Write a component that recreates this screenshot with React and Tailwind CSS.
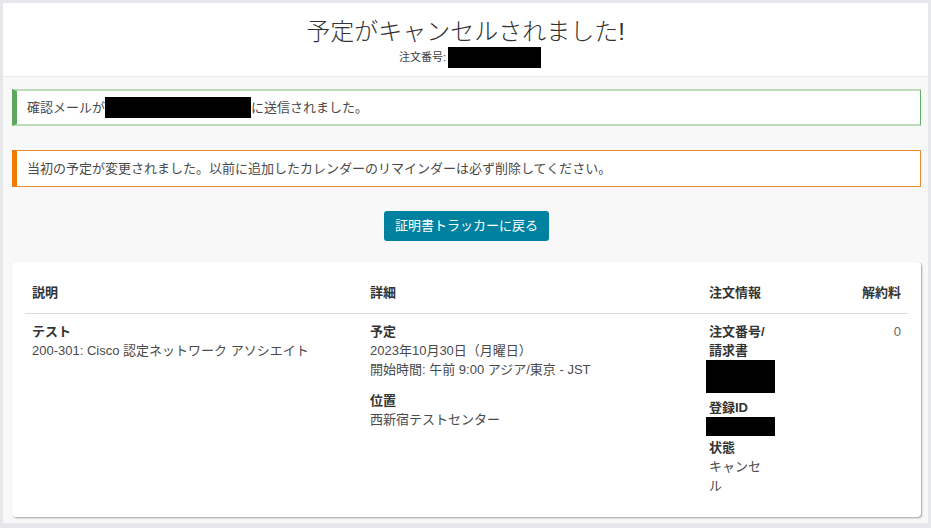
import React from 'react';

const FONT = { fontFamily: '"Liberation Sans", "Noto Sans CJK JP", sans-serif' };

// --- Redaction block ---
const Redacted = ({ className }) => (
  <span className={`inline-block bg-black align-middle ${className}`}></span>
);

// --- Alert banner ---
const Alert = ({ tone, children, className = '' }) => {
  const styles =
    tone === 'success'
      ? 'border-l-[5px] border-l-[#5ea75e] border-y-2 border-y-[#bcdcbc] border-r border-r-[#63aa63]'
      : 'border-l-[5px] border-l-[#ef7b00] border-y border-y-[#e98a2c] border-r border-r-[#e98a2c]';
  return (
    <div className={`h-[37px] flex items-center bg-white pl-[10px] text-[13px] text-[#4a4a4a] ${styles} ${className}`}>
      {children}
    </div>
  );
};

export default function App() {
  return (
    <div className="min-h-[528px] w-[931px] bg-[#e6e7eb] pt-[3px] pl-[3px] pr-[3px] pb-[5px]" style={FONT}>
      <div className="w-[925px] h-[520px] flex flex-col">
        {/* Header */}
        <header className="h-[74px] bg-white border-b border-[#ebebeb] flex flex-col items-center pt-[14px]">
          <h1 className="text-[24px] leading-[30px] font-light text-[#333]">予定がキャンセルされました!</h1>
          <div className="flex items-center gap-[2px] text-[11px] text-[#444] pl-[9px]">
            <span>注文番号:</span>
            <Redacted className="w-[93px] h-[21px]" />
          </div>
        </header>

        {/* Body */}
        <main className="flex-1 bg-[#f8f8f8] pl-[9px] pr-[7px] pt-[12px]">
          <Alert tone="success">
            <span>確認メールが</span>
            <Redacted className="w-[146px] h-[21px]" />
            <span>に送信されました。</span>
          </Alert>

          <Alert tone="warning" className="mt-[24px]">
            当初の予定が変更されました。以前に追加したカレンダーのリマインダーは必ず削除してください。
          </Alert>

          <div className="flex justify-center mt-[24px]">
            <button className="w-[165px] h-[30px] rounded-[3px] bg-[#00819f] text-white text-[13px]">
              証明書トラッカーに戻る
            </button>
          </div>

          {/* Order card */}
          <section className="mt-[21px] h-[255px] bg-white rounded-[4px] shadow-[1px_1px_2px_rgba(0,0,0,0.35)] px-[13px]">
            <div className="grid grid-cols-[338px_339px_80px_1fr] pt-[21px] pb-[11px] border-b border-[#dcdcdc] text-[13px] leading-[19px] font-bold text-[#333]">
              <div className="px-[7px]">説明</div>
              <div className="px-[7px]">詳細</div>
              <div className="px-[7px]">注文情報</div>
              <div className="px-[7px] text-right">解約料</div>
            </div>

            <div className="grid grid-cols-[338px_339px_80px_1fr] pt-[8px] text-[13px] leading-[19px] text-[#4a4a4a]">
              <div className="px-[7px]">
                <div className="font-bold text-[#333]">テスト</div>
                <div>200-301: Cisco 認定ネットワーク アソシエイト</div>
              </div>

              <div className="px-[7px]">
                <div className="font-bold text-[#333]">予定</div>
                <div>2023年10月30日（月曜日）</div>
                <div>開始時間: 午前 9:00 アジア/東京 - JST</div>
                <div className="font-bold text-[#333] mt-[12px]">位置</div>
                <div>西新宿テストセンター</div>
              </div>

              <div className="px-[7px] flex flex-col items-start">
                <div className="font-bold text-[#333]">注文番号/</div>
                <div className="font-bold text-[#333]">請求書</div>
                <Redacted className="w-[69px] h-[33px] -ml-[3px]" />
                <div className="font-bold text-[#333] mt-[5px]">登録ID</div>
                <Redacted className="w-[69px] h-[19px] -ml-[3px]" />
                <div className="font-bold text-[#333] mt-[2px]">状態</div>
                <div>キャンセ</div>
                <div>ル</div>
              </div>

              <div className="px-[7px] text-right text-[#666]">0</div>
            </div>
          </section>
        </main>
      </div>
    </div>
  );
}
